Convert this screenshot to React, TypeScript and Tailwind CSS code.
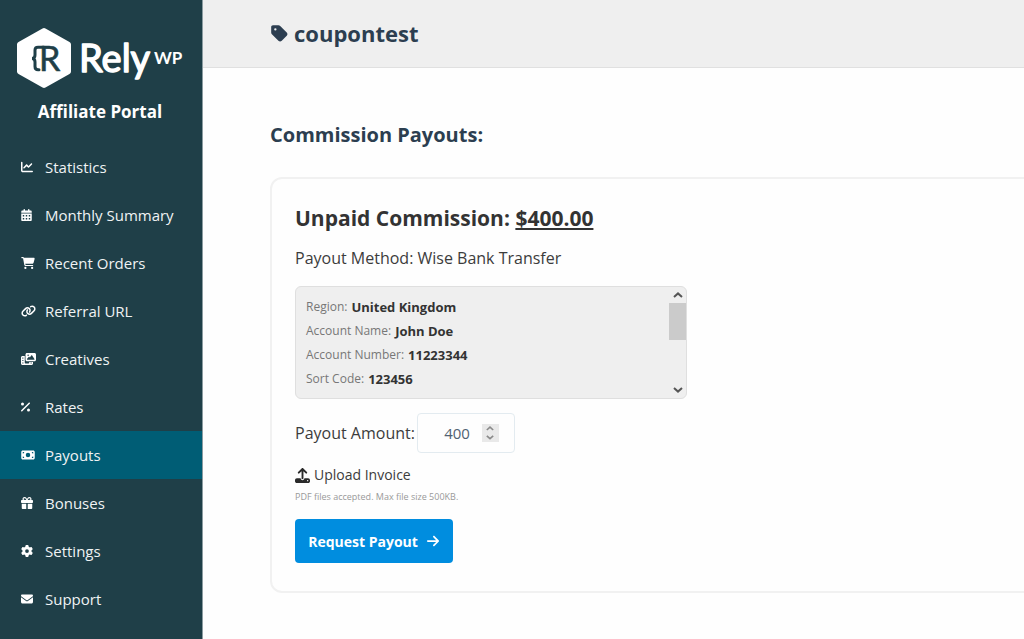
import type { IconType } from 'react-icons';
import {
  FaArrowRight,
  FaCalendarDays,
  FaCartShopping,
  FaChartLine,
  FaEnvelope,
  FaGear,
  FaGift,
  FaLink,
  FaMoneyBill,
  FaPercent,
  FaPhotoFilm,
  FaTag,
  FaUpload,
} from 'react-icons/fa6';

type NavItem = { label: string; icon: IconType; width: string; active?: boolean };

const navItems: NavItem[] = [
  { label: 'Statistics', icon: FaChartLine, width: 'w-3' },
  { label: 'Monthly Summary', icon: FaCalendarDays, width: 'w-[11px]' },
  { label: 'Recent Orders', icon: FaCartShopping, width: 'w-[14px]' },
  { label: 'Referral URL', icon: FaLink, width: 'w-[15px]' },
  { label: 'Creatives', icon: FaPhotoFilm, width: 'w-[15px]' },
  { label: 'Rates', icon: FaPercent, width: 'w-[9px]' },
  { label: 'Payouts', icon: FaMoneyBill, width: 'w-[14px]', active: true },
  { label: 'Bonuses', icon: FaGift, width: 'w-3' },
  { label: 'Settings', icon: FaGear, width: 'w-3' },
  { label: 'Support', icon: FaEnvelope, width: 'w-3' },
];

const bankDetails = [
  { label: 'Region', value: 'United Kingdom' },
  { label: 'Account Name', value: 'John Doe' },
  { label: 'Account Number', value: '11223344' },
  { label: 'Sort Code', value: '123456' },
];

function Logo() {
  return (
    <svg viewBox="0 0 168 62" className="w-[168px] h-[62px]" role="img" aria-label="RelyWP">
      <path
        d="M27 4 L51 17.5 V44.5 L27 58 L3 44.5 V17.5 Z"
        fill="#fff"
        stroke="#fff"
        strokeWidth="6"
        strokeLinejoin="round"
      />
      {/* brace in front of the initial */}
      <path
        d="M27 20.2 H21 Q18 20.2 18 23 V28 Q18 31.5 15 31.5 Q18 31.5 18 35 V39.5 Q18 42.8 21 42.8 H22"
        fill="none"
        stroke="#1f3f48"
        strokeWidth="3"
        strokeLinecap="round"
      />
      <text x="22" y="43.5" fontFamily="Lato, sans-serif" fontSize="34" fontWeight="400" fill="#1f3f48" stroke="#1f3f48" strokeWidth="0.6" strokeLinejoin="round">R</text>
      <text x="62" y="45" fontFamily="Lato, sans-serif" fontSize="38" fontWeight="400" fill="#fff" stroke="#fff" strokeWidth="1.4" strokeLinejoin="round">Rely</text>
      <text x="137" y="37" fontFamily="Lato, sans-serif" fontSize="17" fontWeight="700" fill="#fff">WP</text>
    </svg>
  );
}

function Chevron({ up = false, className }: { up?: boolean; className: string }) {
  return (
    <svg viewBox="0 0 10 6" className={className} fill="none" stroke="currentColor" strokeWidth="2" aria-hidden="true">
      <path d={up ? 'M1 5 L5 1.4 L9 5' : 'M1 1 L5 4.6 L9 1'} />
    </svg>
  );
}

function Sidebar() {
  return (
    <aside className="w-[203px] shrink-0 bg-[#1f3f48] border-r border-[#8b9ca1] text-white">
      <div className="pt-[27px] pl-[17px]">
        <Logo />
      </div>
      <p className="mt-[13px] pr-0.5 text-center text-[17px] leading-5 font-bold">Affiliate Portal</p>
      <nav className="mt-[21px]">
        {navItems.map(({ label, icon: Icon, width, active }) => (
          <a
            key={label}
            href="#"
            className={`flex h-12 items-center pl-[21px] text-[15px] ${active ? 'bg-[#005d75]' : ''}`}
          >
            <span className="w-6 shrink-0">
              <Icon className={`h-3 ${width}`} />
            </span>
            <span className="text-[#f0f3f4]">{label}</span>
          </a>
        ))}
      </nav>
    </aside>
  );
}

function BankDetails() {
  return (
    <div className="flex h-[113px] w-[392px] max-w-full rounded-md border border-[#dfdfdf] bg-[#efefef]">
      <dl className="grow overflow-hidden px-2.5 pt-2 text-[13px] leading-6">
        {bankDetails.map(({ label, value }) => (
          <div key={label} className="flex h-6 items-center gap-1">
            <dt className="text-[12px] text-[#777]">{label}:</dt>
            <dd className="font-bold text-[#333]">{value}</dd>
          </div>
        ))}
      </dl>
      <div className="flex w-[17px] shrink-0 flex-col text-[#555]">
        <button type="button" aria-label="Scroll up" className="flex h-4 items-center justify-center">
          <Chevron up className="w-[10px]" />
        </button>
        <div className="h-[37px] bg-[#cbcbcb]" />
        <button type="button" aria-label="Scroll down" className="mt-auto flex h-4 items-center justify-center">
          <Chevron className="w-[10px]" />
        </button>
      </div>
    </div>
  );
}

function PayoutCard() {
  return (
    <section className="-mr-6 mt-[26px] rounded-xl border-2 border-[#f1f1f1] pr-12 pl-[23px] pt-[23px] pb-7 text-[#3c3c3c]">
      <h3 className="text-[21px] leading-8 font-bold text-[#333]">
        Unpaid Commission: <span className="underline decoration-2 underline-offset-2">$400.00</span>
      </h3>
      <p className="mt-3 mb-4 text-[16px] leading-6">Payout Method: Wise Bank Transfer</p>
      <BankDetails />

      <div className="mt-[14px] flex items-center gap-0.5">
        <label htmlFor="amount" className="text-[16px]">Payout Amount:</label>
        <div className="flex h-10 w-[98px] items-center rounded border border-[#e3ebf0]">
          <input
            id="amount"
            type="number"
            defaultValue={400}
            className="w-[52px] text-right text-[15px] text-[#506172] outline-none [appearance:textfield] [&::-webkit-inner-spin-button]:appearance-none"
          />
          <div className="ml-3 flex w-[17px] flex-col bg-[#e9e9e9] text-[#8a8a8a]">
            <button type="button" aria-label="Increase" className="flex h-[9px] items-center justify-center">
              <Chevron up className="w-2" />
            </button>
            <button type="button" aria-label="Decrease" className="flex h-[9px] items-center justify-center">
              <Chevron className="w-2" />
            </button>
          </div>
        </div>
      </div>

      <label className="mt-2.5 flex items-center gap-1 text-[14px] leading-6">
        <FaUpload className="size-[15px] text-[#2a2a2a]" />
        Upload Invoice
        <input type="file" accept="application/pdf" className="sr-only" />
      </label>
      <p className="mt-0.5 text-[9px] leading-4 text-[#999]">PDF files accepted. Max file size 500KB.</p>

      <button
        type="button"
        className="mt-3.5 flex h-11 w-[158px] items-center justify-center gap-2 rounded-sm bg-[#008ddf] text-[14px] font-bold text-white"
      >
        Request Payout
        <FaArrowRight className="size-[14px]" />
      </button>
    </section>
  );
}

export default function App() {
  return (
    <div className="flex min-h-screen bg-[#fefefe] font-['Open_Sans',sans-serif]">
      <Sidebar />
      <main className="min-w-0 grow overflow-hidden">
        <header className="flex h-[68px] items-center gap-1.5 border-b border-[#e0e0e0] bg-[#efefef] pl-[68px] text-[#2c3e50]">
          <FaTag className="h-[19px] w-[17px]" />
          <h1 className="text-[22px] font-bold">coupontest</h1>
        </header>
        <div className="pt-[51px] pl-[67px]">
          <h2 className="text-[20px] leading-8 font-bold text-[#2c3e50]">Commission Payouts:</h2>
          <PayoutCard />
        </div>
      </main>
    </div>
  );
}
